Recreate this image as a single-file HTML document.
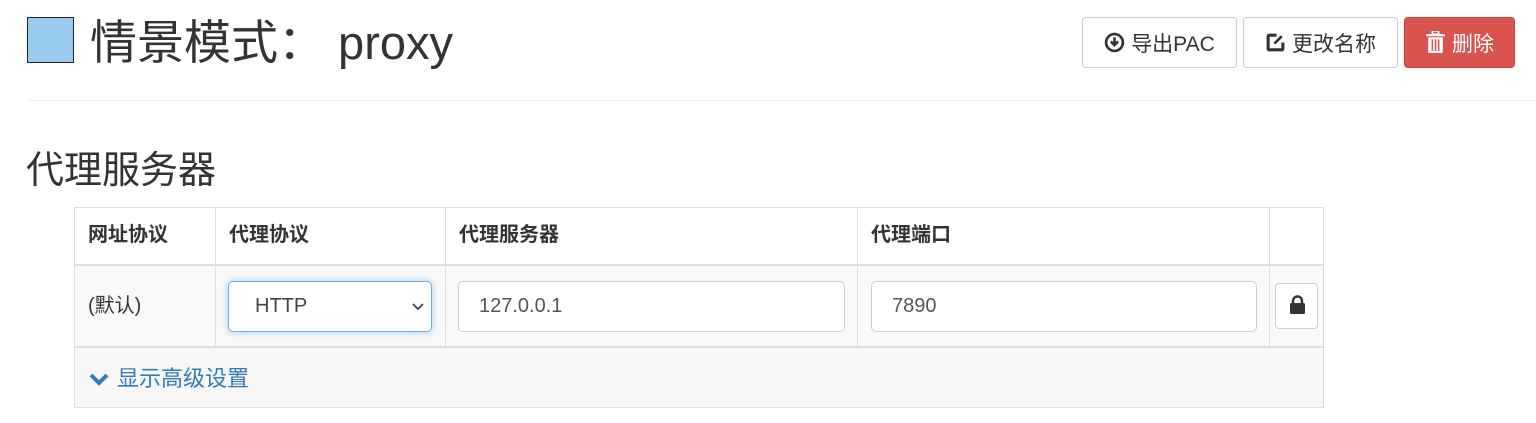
<!DOCTYPE html><html><head><meta charset="utf-8"><style>
body{margin:0;width:1536px;height:423px;background:#fff;font-family:"Liberation Sans","Noto Sans CJK SC",sans-serif;color:#333;position:relative;overflow:hidden}
.a{position:absolute}
.btn{position:absolute;top:17px;height:51px;border:1px solid #ccc;border-radius:4px;box-sizing:border-box;background:#fff;font-size:21px;display:flex;align-items:center;justify-content:center;gap:6px}
.th{position:absolute;top:207px;height:57px;font-weight:bold;font-size:20px;line-height:57px;padding-left:14px;box-sizing:border-box}
.inp{position:absolute;top:281px;height:51px;border:1px solid #ccc;border-radius:5px;box-sizing:border-box;background:#fff;font-size:20px;line-height:49px;padding-left:20px;color:#555}
</style></head><body>
<div class="a" style="left:27px;top:17px;width:45px;height:44px;background:#99ccee;border:1px solid #222"></div>
<div class="a" style="left:90px;top:10px;font-size:47px;line-height:66px;color:#333">情景模式： proxy</div>
<div class="btn" style="left:1082px;width:155px"><svg width="21" height="21" viewBox="0 0 20 20"><circle cx="10" cy="10" r="8" fill="none" stroke="#333" stroke-width="2.5"/><path d="M10 5v7M6.5 9l3.5 3.5 3.5-3.5" stroke="#333" stroke-width="2.5" fill="none"/></svg>导出PAC</div>
<div class="btn" style="left:1243px;width:155px"><svg width="21" height="21" viewBox="0 0 20 20"><path d="M11 3H4a1 1 0 0 0-1 1v12a1 1 0 0 0 1 1h12a1 1 0 0 0 1-1V10" fill="none" stroke="#333" stroke-width="3"/><path d="M9 11l7-7" stroke="#333" stroke-width="2.5"/></svg>更改名称</div>
<div class="btn" style="left:1404px;width:111px;background:#d9534f;border-color:#d43f3a;color:#fff"><svg width="21" height="23" viewBox="0 0 20 22"><rect x="1" y="3" width="18" height="2" fill="#fff"/><rect x="7" y="0" width="6" height="3" fill="none" stroke="#fff" stroke-width="1.5"/><path d="M3 6h14v15H3z" fill="#fff"/><path d="M7 8v11M10 8v11M13 8v11" stroke="#d9534f" stroke-width="1.5"/></svg>删除</div>
<div class="a" style="left:27px;top:100px;width:1509px;height:1px;background:#eee"></div>
<div class="a" style="left:26px;top:145px;font-size:38px;line-height:52px">代理服务器</div>
<div class="a" style="left:74px;top:207px;width:1250px;height:201px;border:1px solid #ddd;box-sizing:border-box"></div>
<div class="a" style="left:75px;top:266px;width:1248px;height:80px;background:#f9f9f9"></div>
<div class="a" style="left:75px;top:348px;width:1248px;height:59px;background:#f7f7f7"></div>
<div class="a" style="left:75px;top:264px;width:1248px;height:2px;background:#ddd"></div>
<div class="a" style="left:75px;top:346px;width:1248px;height:2px;background:#ddd"></div>
<div class="a" style="left:215px;top:207px;width:1px;height:139px;background:#ddd"></div>
<div class="a" style="left:445px;top:207px;width:1px;height:139px;background:#ddd"></div>
<div class="a" style="left:857px;top:207px;width:1px;height:139px;background:#ddd"></div>
<div class="a" style="left:1269px;top:207px;width:1px;height:139px;background:#ddd"></div>
<div class="th" style="left:74px">网址协议</div>
<div class="th" style="left:215px">代理协议</div>
<div class="th" style="left:445px">代理服务器</div>
<div class="th" style="left:857px">代理端口</div>
<div class="a" style="left:88px;top:290px;font-size:20px;line-height:32px">(默认)</div>
<div class="inp" style="left:228px;width:204px;border-color:#66afe9;box-shadow:0 0 8px rgba(102,175,233,.6);padding-left:26px;color:#444">HTTP<svg class="a" style="right:6px;top:20px" width="14" height="10" viewBox="0 0 14 10"><path d="M2 2l5 5 5-5" stroke="#444" stroke-width="1.8" fill="none"/></svg></div>
<div class="inp" style="left:458px;width:387px">127.0.0.1</div>
<div class="inp" style="left:871px;width:386px">7890</div>
<div class="a" style="left:1275px;top:283px;width:43px;height:46px;border:1px solid #ccc;border-radius:4px;box-sizing:border-box;background:#fff"><svg class="a" style="left:13px;top:11px" width="17" height="20" viewBox="0 0 17 20"><path d="M4 8V6a4.5 4.5 0 0 1 9 0v2" fill="none" stroke="#333" stroke-width="2.4"/><rect x="1" y="8" width="15" height="11" rx="1.5" fill="#333"/></svg></div>
<div class="a" style="left:89px;top:364px;color:#337ab7;font-size:22px;line-height:30px;display:flex;align-items:center;gap:8px"><svg width="20" height="14" viewBox="0 0 20 14"><path d="M2 3l8 8 8-8" stroke="#337ab7" stroke-width="4" fill="none"/></svg>显示高级设置</div>
</body></html>
